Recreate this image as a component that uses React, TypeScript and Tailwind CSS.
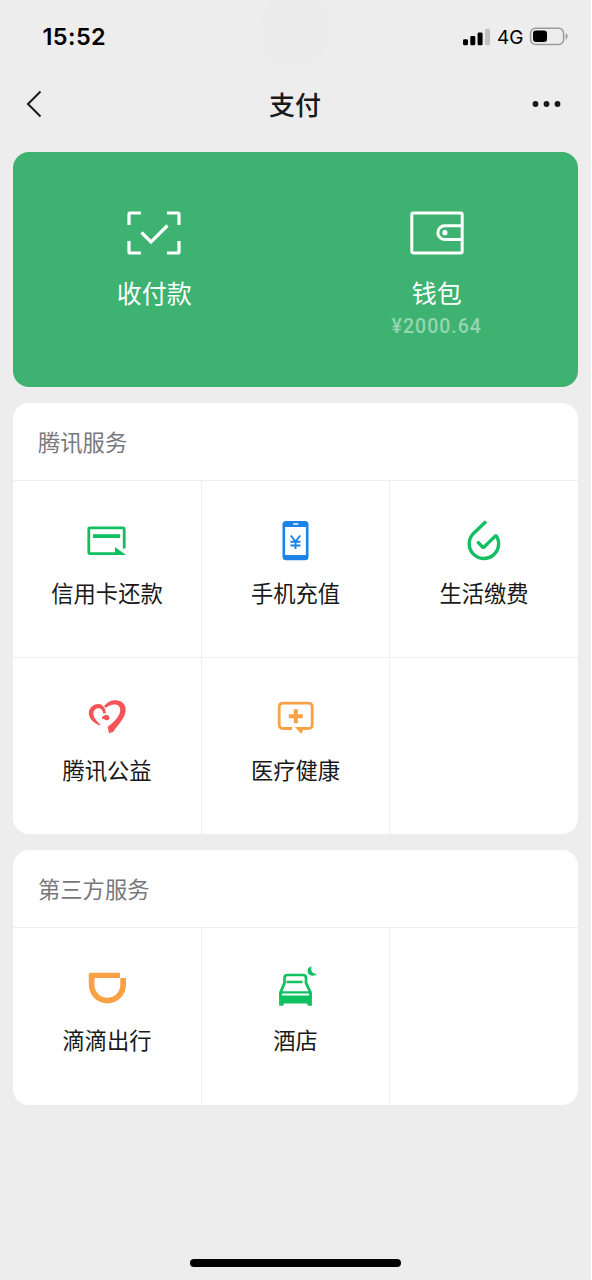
import type { ReactNode } from 'react';

interface Service {
  name: string;
  icon: ReactNode;
}

interface ServiceCardProps {
  title: string;
  services: Service[];
  slots: number;
}

const tencentServices: Service[] = [
  { name: '信用卡还款', icon: <CreditCardIcon /> },
  { name: '手机充值', icon: <PhoneIcon /> },
  { name: '生活缴费', icon: <UtilitiesIcon /> },
  { name: '腾讯公益', icon: <CharityIcon /> },
  { name: '医疗健康', icon: <HealthIcon /> },
];

const thirdPartyServices: Service[] = [
  { name: '滴滴出行', icon: <DidiIcon /> },
  { name: '酒店', icon: <HotelIcon /> },
];

export default function App() {
  return (
    <div className="relative flex h-[1280px] w-[591px] flex-col overflow-hidden bg-[#ededed] font-['Noto_Sans_CJK_SC',sans-serif] text-[#191919]">
      <div className="absolute -top-2 left-[258px] h-[76px] w-[73px] rounded-full bg-[#ececec]" />
      <StatusBar />
      <NavBar />
      <main className="flex flex-col gap-4 px-[13px]">
        <PayCard />
        <ServiceCard title="腾讯服务" services={tencentServices} slots={6} />
        <ServiceCard title="第三方服务" services={thirdPartyServices} slots={3} />
      </main>
      <div className="mt-auto mb-[13px] ml-[190px] h-2 w-[211px] rounded-full bg-black" />
    </div>
  );
}

function StatusBar() {
  return (
    <header className="relative flex h-[73px] items-center justify-between pr-[22px] pl-[42.5px] font-[Inter,sans-serif] text-black">
      <span className="text-[23.5px] leading-none font-semibold tracking-[0.4px]">15:52</span>
      <div className="flex items-center">
        <svg width="28" height="18" viewBox="0 0 28 18">
          <rect x="0" y="11.3" width="5" height="6" rx="1.4" />
          <rect x="7.3" y="8.1" width="5" height="9.2" rx="1.4" />
          <rect x="14.6" y="4.5" width="5" height="12.8" rx="1.4" />
          <rect x="22" y="0.8" width="5" height="16.5" rx="1.4" fill="#c2c2c2" />
        </svg>
        <span className="ml-[6px] w-[32px] pt-px text-[19px] leading-none">4G</span>
        <svg width="40" height="19" viewBox="0 0 40 19">
          <rect x="1.6" y="1.2" width="33" height="16.2" rx="5" fill="none" stroke="#9b9b9b" strokeWidth="1.5" />
          <rect x="4" y="3.6" width="14" height="11.4" rx="3" />
          <path d="M36.6 6.3c2.6 1 2.6 5.4 0 6.4z" fill="#9b9b9b" />
        </svg>
      </div>
    </header>
  );
}

function NavBar() {
  return (
    <nav className="relative flex h-[79px] items-center justify-between px-[26px] pb-[18px]">
      <svg width="30" height="30" viewBox="0 0 30 30" fill="none" stroke="#191919" strokeWidth="2">
        <path d="M14.5 2.5 2 15l12.5 12.5" />
      </svg>
      <h1 className="ml-[3px] text-[26px] leading-none font-medium">支付</h1>
      <svg width="34" height="10" viewBox="0 0 34 10" fill="#191919">
        <circle cx="4.5" cy="5" r="2.9" />
        <circle cx="15.5" cy="5" r="2.9" />
        <circle cx="26.5" cy="5" r="2.9" />
      </svg>
    </nav>
  );
}

function PayCard() {
  return (
    <section className="grid h-[235px] grid-cols-2 rounded-[16px] bg-[#3eb371] text-white">
      <div className="flex flex-col items-center pt-[58px]">
        <svg width="56" height="46" viewBox="0 0 56 46" fill="none" stroke="currentColor" strokeWidth="3.2">
          <path d="M3 15V4q0-1 1-1h11M41 3h11q1 0 1 1v11M53 31v11q0 1-1 1H41M15 43H4q-1 0-1-1V31" />
          <path d="m15.5 22.5 9.5 9.5L41.5 15.5" />
        </svg>
        <span className="mt-[22px] text-[25px] leading-[28px]">收付款</span>
      </div>
      <div className="flex flex-col items-center pt-[58px]">
        <svg width="56" height="46" viewBox="0 0 56 46" fill="none" stroke="currentColor" strokeWidth="3">
          <rect x="2.8" y="3" width="50.4" height="40" rx="1.5" />
          <path d="M53 15.8H35.7a6.85 6.85 0 0 0 0 13.7H53" />
          <circle cx="35.9" cy="22.7" r="2.6" fill="currentColor" stroke="none" />
        </svg>
        <span className="mt-[22px] text-[25px] leading-[28px]">钱包</span>
        <span className="mt-[11px] font-[Roboto,sans-serif] text-[19.5px] leading-[20px] font-medium tracking-[1px] text-[#96d5b1]">
          ¥2000.64
        </span>
      </div>
    </section>
  );
}

function ServiceCard({ title, services, slots }: ServiceCardProps) {
  const cells = Array.from({ length: slots }, (_, index) => services[index] ?? null);

  return (
    <section className="overflow-hidden rounded-[16px] bg-white last:pb-px">
      <h2 className="h-[77px] pl-[25px] text-[22.3px] leading-[76px] text-[#77777c]">{title}</h2>
      <div className="grid grid-cols-[189px_188px_188px]">
        {cells.map((service, index) => (
          <div
            key={index}
            className="flex h-[177px] flex-col items-center border-t border-r border-[#efefef] pt-[38px] nth-[3n]:border-r-0"
          >
            {service ? (
              <>
                {service.icon}
                <span className="mt-[17px] text-[22.3px] leading-[24px] whitespace-nowrap">{service.name}</span>
              </>
            ) : null}
          </div>
        ))}
      </div>
    </section>
  );
}

function CreditCardIcon() {
  return (
    <svg width="44" height="44" viewBox="0 0 44 44" fill="#10c060">
      <path d="M31 34.6H5q-1.2 0-1.2-1.2V10q0-1.2 1.2-1.2h33q1.2 0 1.2 1.2v19.5" fill="none" stroke="#10c060" strokeWidth="2.8" />
      <rect x="8" y="15.2" width="27" height="3.8" />
      <path d="m30 28 11 8H30z" />
    </svg>
  );
}

function PhoneIcon() {
  return (
    <svg width="44" height="44" viewBox="0 0 44 44">
      <rect x="8.5" y="2" width="26" height="39.3" rx="3.5" fill="#1c83e8" />
      <rect x="11.1" y="8" width="20.8" height="28" fill="#fff" />
      <rect x="19" y="4.2" width="5.5" height="1.6" rx="0.8" fill="#fff" />
      <path d="m16.8 16.5 4.7 6 4.7-6M21.5 22v8M16.5 22.8h10M16.5 26.5h10" fill="none" stroke="#1c83e8" strokeWidth="1.9" />
    </svg>
  );
}

function UtilitiesIcon() {
  return (
    <svg width="44" height="44" viewBox="0 0 44 44" fill="none" stroke="#12c063" strokeWidth="3.4">
      <path d="M24 2.6 10.7 15.25A14.7 14.7 0 1 0 34 16.4L21.3 28.7l-6-6.1" strokeLinejoin="bevel" />
    </svg>
  );
}

function CharityIcon() {
  return (
    <svg width="44" height="44" viewBox="0 0 44 44" fill="#f65356">
      <path d="M19.3 9.7C23 5.5 27.5 3.8 31.7 4.3c5.5.7 9.3 4.7 9 9.7-.4 8.5-7.7 14.5-12.4 21.7L24 37.2l-1.3-6.2c4.3-4.2 8.2-6.6 10.2-10.3 1.7-2.7 2.700-5.200 2.200-7.700-.4-2.700-2.100-4-4.500-4.400-3.300-.4-6.600.9-8.900 2.600-1.300 1-2.300 0-2.400-1.500z" />
      <path d="M21 17.300c-.7-5.800-3.500-9.200-7.700-9.200C8 8.100 3.800 12.500 3.800 17.300c0 5.700 5.700 10 11 12.300l.7-1.400c-1.800-1-3.200-2.500-4.300-4-1.900-2.200-2.800-4.400-2.800-6.700 0-3.200 2.200-5.200 5.200-5.200 2.700 0 4.200 2 4.600 5z" />
      <path d="M18.700 20c1-1.400 4.200-1.400 5.500.4 1 1.900-.3 3.900-2.500 3.900-1.300 0-2.200-.7-2.900-1.500-.8.500-1.900 0-1.800-1.100.1-1 .8-1.600 1.700-1.700z" />
    </svg>
  );
}

function HealthIcon() {
  return (
    <svg width="44" height="44" viewBox="0.5 0 44 44" fill="#f8a145">
      <path d="M18.5 32.5H9.7q-4 0-4-4V11.2q0-4 4-4h25q4 0 4 4v17.3q0 4-4 4h-6" fill="none" stroke="#f8a145" strokeWidth="2.8" />
      <path d="M20.3 13.3h4v5h5v4h-5v5h-4v-5h-5v-4h5zM21.5 31.1H30V33l-2.3 5z" />
    </svg>
  );
}

function DidiIcon() {
  return (
    <svg width="44" height="44" viewBox="0 0 44 44" fill="#f8a145">
      <path
        fillRule="evenodd"
        d="M5.5 6.7H35v5.4h6v6.7a18.6 18.6 0 0 1-37.2 0V8.5q0-1.8 1.7-1.8zM9.5 12.1v6.7a12.9 12.9 0 0 0 25.8 0v-6.7z"
      />
    </svg>
  );
}

function HotelIcon() {
  return (
    <svg width="44" height="44" viewBox="0.5 0 44 44" fill="#0fc161">
      <path d="M11 17.5V12q0-3 3-3h15.500q3 0 3 3v5.500" fill="none" stroke="#0fc161" strokeWidth="2.7" />
      <path d="M13 16h16" stroke="#0fc161" strokeWidth="2.4" />
      <path d="M11 17 7 26.5v5M32.5 17l4.500 9.500v5" fill="none" stroke="#0fc161" strokeWidth="2.900" />
      <path d="M7 26.300h30" stroke="#0fc161" strokeWidth="2.200" />
      <path d="M5.600 29.600h32.800v10.100h-4L33.500 37.500h-23l-.9 2.200h-4z" />
      <path d="M38.200.2c-3.400.8-4.600 3.400-3.900 6 .8 3.300 5.800 5.100 9.200 1.500-4.300.6-7-3.200-5.300-7.500z" />
    </svg>
  );
}
